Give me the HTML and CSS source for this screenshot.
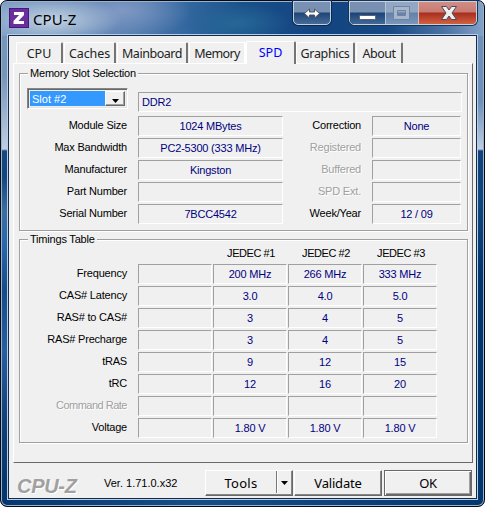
FILE: index.html
```html
<!DOCTYPE html>
<html lang="en">
<head>
<meta charset="utf-8">
<title>CPU-Z</title>
<link rel="stylesheet" href="styles.css">
</head>
<body>
<div class="window">
  <header class="titlebar">
    <svg class="logo" width="20" height="20" viewBox="0 0 20 20"><rect width="20" height="20" fill="#45187d"/><rect x="1" y="1" width="18" height="18" fill="#6b2f9c"/><path d="M5 4h10v3l-5.500 6H15v3H4.500v-3l5.600-6H5z" fill="#fff"/></svg>
    <span class="caption">CPU-Z</span>
    <div class="span-button"><svg width="36" height="22" viewBox="0 0 36 22"><path d="M10.500 12.500l5-4.500v3h5V8l5 4.500-5 4.500v-3h-5v3z" fill="#fff" stroke="#4b5360"/></svg></div>
    <div class="controls">
      <div class="control min"><svg width="35" height="22"><rect x="9.500" y="14.500" width="16" height="4" rx="1" fill="#fff" stroke="#566078"/></svg></div>
      <div class="control max"><svg width="33" height="22"><path d="M7.500 5.500h16v13h-16zM11.500 9.500h8v5h-8z" fill="#a6b5cb" fill-rule="evenodd" stroke="#71849f"/></svg></div>
      <div class="control close"><svg width="58" height="22"><path d="M22.500 5.500h5l2.500 3.500 2.500-3.500h5l-4.500 6.500 4.500 6.500h-5l-2.500-3.500-2.500 3.500h-5l4.500-6.500z" fill="#eee" stroke="#50495a"/></svg></div>
    </div>
  </header>
  <main class="client">
    <nav class="tabs">
      <div class="tab cpu"><span>CPU</span></div><div class="tab caches"><span>Caches</span></div><div class="tab mainboard"><span>Mainboard</span></div><div class="tab memory"><span>Memory</span></div><div class="tab spd"><span>SPD</span></div><div class="tab graphics"><span>Graphics</span></div><div class="tab about"><span>About</span></div>
    </nav>
    <div class="page">
      <section class="group slots">
        <h2><span class="t-slot">Memory Slot Selection</span></h2>
        <div class="slot-row">
          <div class="combo"><span>Slot #2</span><i><svg width="8" height="4"><path d="M0 0h7L3.500 4z"/></svg></i></div>
          <div class="field type">DDR2</div>
        </div>
        <div class="info">
          <label>Module Size</label><div class="field">1024 MBytes</div><label>Correction</label><div class="field">None</div>
          <label>Max Bandwidth</label><div class="field">PC2-5300 (333 MHz)</div><label class="off">Registered</label><div class="field"></div>
          <label>Manufacturer</label><div class="field">Kingston</div><label class="off">Buffered</label><div class="field"></div>
          <label>Part Number</label><div class="field"></div><label class="off">SPD Ext.</label><div class="field"></div>
          <label>Serial Number</label><div class="field">7BCC4542</div><label>Week/Year</label><div class="field">12 / 09</div>
        </div>
      </section>
      <section class="group timings">
        <h2><span class="t-time">Timings Table</span></h2>
        <div class="heads"><b>JEDEC #1</b><b>JEDEC #2</b><b>JEDEC #3</b></div>
        <div class="table">
          <label>Frequency</label><div class="field"></div><div class="field">200 MHz</div><div class="field">266 MHz</div><div class="field">333 MHz</div>
          <label>CAS# Latency</label><div class="field"></div><div class="field">3.0</div><div class="field">4.0</div><div class="field">5.0</div>
          <label>RAS# to CAS#</label><div class="field"></div><div class="field">3</div><div class="field">4</div><div class="field">5</div>
          <label>RAS# Precharge</label><div class="field"></div><div class="field">3</div><div class="field">4</div><div class="field">5</div>
          <label>tRAS</label><div class="field"></div><div class="field">9</div><div class="field">12</div><div class="field">15</div>
          <label>tRC</label><div class="field"></div><div class="field">12</div><div class="field">16</div><div class="field">20</div>
          <label class="off">Command Rate</label><div class="field"></div><div class="field"></div><div class="field"></div><div class="field"></div>
          <label>Voltage</label><div class="field"></div><div class="field">1.80 V</div><div class="field">1.80 V</div><div class="field">1.80 V</div>
        </div>
      </section>
    </div>
    <footer class="footer">
      <div class="brand">CPU-Z</div>
      <div class="version">Ver. 1.71.0.x32</div>
      <div class="button tools"><span>Tools</span><i><svg width="8" height="4"><path d="M0 0h7L3.500 4z"/></svg></i></div>
      <div class="button validate">Validate</div>
      <div class="button ok">OK</div>
    </footer>
  </main>
</div>
</body>
</html>
```

FILE: styles.css
```css
* { box-sizing: border-box; }
body { margin: 0; width: 485px; height: 507px; overflow: hidden; background: #fff; font: 11px/13px "Liberation Sans", Arial, sans-serif; color: #000; }
svg { display: block; }
i, b { font-style: normal; font-weight: normal; }
.window {
  width: 485px; height: 507px; padding: 0 7px 7px; border: 1px solid #05080e; border-radius: 7px;
  box-shadow: inset 0 0 0 1px #93b4d3;
  background:
    radial-gradient(ellipse 70px 24px at 50px 19px, #c3d4e5 0%, #a9bed6bb 50%, transparent 100%) no-repeat 0 0 / 100% 35px,
    radial-gradient(ellipse 70px 30px at 120px 10px, #8098c4 0%, transparent 100%) no-repeat 0 0 / 100% 35px,
    radial-gradient(ellipse 55px 20px at 235px 22px, #266796 0%, transparent 100%) no-repeat 0 0 / 100% 35px,
    linear-gradient(90deg, #7d9cc4 0, #5f86b4 20%, #3468a0 38%, #1b5089 50%, #124481 65%, #164883 80%, #4c74a5 92%, #86a2c6 100%) no-repeat 0 0 / 100% 35px,
    linear-gradient(#7696bf 35px, #7795b9 75px, #c1cde0 148px, #164880 150px, #12447e 175px, #3c6f9e 210px, #2a66ab 245px, #164b87 290px, #285fa0 350px, #123f76 420px, #06376c 480px) no-repeat 0 0 / 9px 100%,
    linear-gradient(#7090b9 35px, #6e8fb8 100px, #c1cde0 148px, #124279 150px, #11477f 200px, #06376c 270px, #06376c 480px) no-repeat 100% 0 / 9px 100%,
    linear-gradient(90deg, #06376c, #174c87 40%, #06376c);
}
.titlebar { height: 34px; display: flex; align-items: flex-start; padding-left: 1px; }
.logo { margin-top: 7px; }
.caption { width: 142px; margin: 7px 0 0 4px; font: 15px/22px "Noto Sans", sans-serif; letter-spacing: .1px; }
.span-button { width: 38px; height: 24px; margin-left: 118px; border: 1px solid #c1cfdf; border-radius: 0 0 5px 5px; background: linear-gradient(#7890b2 0 10px, #1d4576 11px, #466c98); box-shadow: 0 0 0 1px #0b2950; }
.controls { display: flex; flex: none; width: 128px; height: 24px; margin-left: 18px; border: 1px solid #c5d2e2; border-radius: 0 0 5px 5px; overflow: hidden; box-shadow: 0 0 0 1px #173454; }
.control { height: 23px; }
.control svg, .span-button svg { margin-top: -1px; }
.min { width: 35px; background: linear-gradient(#7990b3 0 10px, #1c4376 11px, #476c99); }
.max { width: 33px; border-left: 1px solid #b5c4d8; background: linear-gradient(#91a7c4 0 10px, #6380a8 11px, #7b9abd); }
.close { width: 58px; border-left: 1px solid #d7c0c4; background: linear-gradient(#d28d84 0, #c87b72 10px, #a82e1e 11px, #d56545); }
.client { width: 469px; height: 464px; padding: 5px 4px 0; background: #f0f0f0; border: 1px solid #102b4d; box-shadow: 0 0 0 1px #b7cee4; }
.tabs { position: relative; z-index: 1; display: flex; height: 22px; align-items: flex-end; padding-left: 3px; font: 12.5px/17px "Noto Sans", sans-serif; color: #222; }
.tab { height: 21px; border: solid #fff; border-width: 1px 0 0 1px; border-radius: 2px 2px 0 0; border-right: 2px solid #747474; padding-top: 2px; white-space: nowrap; display: flex; justify-content: center; }
.cpu { width: 47px; }
.caches { width: 52px; margin-left: 1px; letter-spacing: -.1px; }
.mainboard { width: 71px; margin-left: 1px; letter-spacing: -.45px; }
.memory { width: 57px; margin-left: 1px; border-right-color: #fff; letter-spacing: -.6px; }
.spd { width: 50px; height: 23px; margin-bottom: -1px; background: #f0f0f0; color: #00f; padding-top: 2px; }
.graphics { width: 59px; letter-spacing: -.35px; }
.about { width: 47px; margin-left: 1px; letter-spacing: -.5px; }
.page { height: 400px; width: 460px; padding: 9px 5px 0; border: 1px solid #fff; border-right: 1px solid #696969; border-bottom: 1px solid #696969; letter-spacing: -.2px; }
.group { width: 449px; border: 1px solid #a0a0a0; box-shadow: 1px 1px #fff, inset 1px 1px #fff; }
.slots { height: 158px; }
.timings { height: 204px; margin-top: 8px; }
h2 { font: inherit; margin: -7px 0 0 8px; height: 13px; }
h2 span { display: inline-block; background: #f0f0f0; padding: 0 2px; white-space: nowrap; }
.slot-row { display: flex; height: 36px; padding: 8px 0 0 7px; }
.combo { width: 101px; height: 21px; display: flex; padding: 2px; border: 1px solid #858585; border-right-color: #fff; border-bottom-color: #fff; box-shadow: inset 1px 1px #696969, inset -1px -1px #e3e3e3; }
.combo span { flex: 1; background: #3399ff; color: #fff; padding: 2px 2px; letter-spacing: 0; }
.combo i { width: 20px; padding: 7px 0 0 6px; border: 1px solid #fff; border-right-color: #696969; border-bottom-color: #696969; box-shadow: inset -1px -1px #a0a0a0; background: #f0f0f0; }
.field { height: 20px; border: 1px solid #a0a0a0; border-right-color: #fff; border-bottom-color: #fff; color: #00007e; text-align: center; padding-top: 3px; white-space: nowrap; }
.type { width: 324px; margin: 4px 0 0 10px; text-align: left; padding-left: 3px; }
.info { display: grid; grid-template-columns: 118px 145px 89px 89px; grid-auto-rows: 20px; row-gap: 2px; }
.info label, .table label { text-align: right; padding: 3px 11px 0 0; white-space: nowrap; }
label.off { color: #a0a0a0; text-shadow: 1px 1px #fff; }
.heads { display: grid; grid-template-columns: repeat(3, 74px); column-gap: 1px; margin: 1px 0 0 194px; height: 17px; text-align: center; letter-spacing: -.45px; }
.table { display: grid; grid-template-columns: 117px repeat(4, 74px); column-gap: 1px; grid-auto-rows: 20px; row-gap: 2px; }
.table label { padding-right: 10px; }
.table label.off { letter-spacing: -.5px; }
.footer { display: flex; padding: 7px 0 0; height: 34px; width: 460px; }
.brand { width: 90px; padding: 4px 0 0 4px; font: italic bold 20px/24px "Liberation Sans", sans-serif; letter-spacing: -.3px; color: #a0a0a0; text-shadow: 1px 1px #fff; }
.version { width: 102px; padding: 7px 0 0 1px; white-space: nowrap; }
.button { height: 26px; border: 1px solid #fff; border-right-color: #696969; border-bottom-color: #696969; box-shadow: inset -1px -1px #858585; font: 13px/24px "Noto Sans", sans-serif; text-align: center; }
.tools { width: 88px; display: flex; }
.tools span { flex: 1; letter-spacing: .3px; }
.tools i { width: 16px; height: 22px; padding: 10px 0 0 4px; border-left: 1px solid #777; box-shadow: inset 1px 0 #fff; }
.validate { width: 88px; margin-left: 1px; letter-spacing: -.2px; }
.ok { width: 88px; margin-left: 2px; letter-spacing: -.4px; border-color: #696969; box-shadow: inset 1px 1px #fff, inset -1px -1px #696969, inset -2px -2px #a0a0a0; }
```
